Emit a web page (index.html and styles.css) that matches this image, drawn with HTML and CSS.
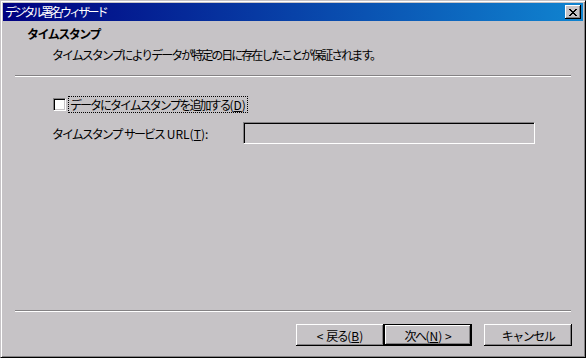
FILE: index.html
```html
<!DOCTYPE html>
<html>
<head>
    <meta charset="UTF-8">
    <title>デジタル署名ウィザード</title>
    <link rel="stylesheet" href="styles.css">
</head>
<body>
    <div class="window">
        <div class="titlebar">
            <span class="title">デジタル署名ウィザード</span>
            <button class="close-btn" aria-label="閉じる">
                <svg width="8" height="7" viewBox="0 0 8 7">
                    <path d="M0 0h2v1h1v1h2V1h1V0h2v1H7v1H6v1H5v1h1v1h1v1h1v1H6V6H5V5H3v1H2v1H0V6h1V5h1V4h1V3H2V2H1V1H0z" fill="#000"/>
                </svg>
            </button>
        </div>

        <!-- ヘッダー -->
        <div class="header">
            <div class="header-title">タイムスタンプ</div>
            <div class="header-desc">タイムスタンプによりデータが特定の日に存在したことが保証されます。</div>
        </div>
        <div class="separator"></div>

        <!-- 本体 -->
        <div class="content">
            <div class="check-row">
                <span class="checkbox"></span>
                <span class="check-label">データにタイムスタンプを追加する<span class="lat">(<u>D</u>)</span></span>
            </div>
            <div class="url-row">
                <span class="url-label">タイムスタンプ<span class="lat">&nbsp;</span>サービス<span class="lat">&nbsp;URL(<u>T</u>):</span></span>
                <span class="url-input"></span>
            </div>
        </div>

        <div class="separator"></div>
        <div class="buttons">
            <button class="btn"><span class="lat">&lt;&nbsp;</span>戻る<span class="lat">(<u>B</u>)</span></button>
            <button class="btn btn-default">次へ<span class="lat">(<u>N</u>)&nbsp;&gt;</span></button>
            <button class="btn btn-cancel">キャンセル</button>
        </div>
    </div>
</body>
</html>
```

FILE: styles.css
```css
/* ダイアログの見た目 */
body {
    margin: 0;
    padding: 0;
    background-color: #c6c3c6;
    font-family: "Noto Sans CJK JP", "Liberation Sans", sans-serif;
    font-size: 12px;
    letter-spacing: -2px;
    color: #000;
}

.lat {
    letter-spacing: 0;
}

.window {
    width: 586px;
    height: 358px;
    box-sizing: border-box;
    border: 1px solid;
    border-color: #c6c3c6 #000 #000 #c6c3c6;
    box-shadow: inset 1px 1px #fff, inset -1px -1px #848284;
    padding: 2px;
    display: flex;
    flex-direction: column;
    background-color: #c6c3c6;
}

.titlebar {
    height: 18px;
    background: linear-gradient(to right, #000080, #1084d0);
    display: flex;
    align-items: center;
    justify-content: space-between;
    padding: 0 2px 0 2px;
}

.title {
    color: #fff;
    font-size: 12px;
    line-height: 18px;
    letter-spacing: -2.8px;
}

.close-btn {
    width: 16px;
    height: 14px;
    padding: 0;
    margin: 0;
    border: none;
    background-color: #c6c3c6;
    box-shadow: inset -1px -1px #000, inset 1px 1px #fff, inset -2px -2px #848284;
    display: flex;
    align-items: center;
    justify-content: center;
}

.header {
    height: 54px;
    box-sizing: border-box;
    padding: 5px 0 0 24px;
}

.header-title {
    font-weight: bold;
    line-height: 15px;
    letter-spacing: -1.5px;
}

.header-desc {
    padding-left: 25px;
    margin-top: 6px;
    line-height: 15px;
}

.separator {
    margin: 0 12px;
    border-top: 1px solid #848284;
    border-bottom: 1px solid #fff;
    height: 0;
}

.content {
    flex: 1;
    padding: 19px 0 0 49px;
}

.check-row {
    display: flex;
    align-items: center;
    height: 17px;
}

.checkbox {
    width: 13px;
    height: 13px;
    box-sizing: border-box;
    background-color: #fff;
    border: 1px solid;
    border-color: #848284 #fff #fff #848284;
    box-shadow: inset 1px 1px #000, inset -1px -1px #c6c3c6;
    margin-left: 1px;
}

.check-label {
    margin-left: 3px;
    padding: 0 1px;
    line-height: 15px;
    outline: 1px dotted #000;
}

.url-row {
    display: flex;
    align-items: center;
    margin-top: 9px;
}

.url-label {
    width: 191px;
}

.url-input {
    width: 292px;
    height: 22px;
    box-sizing: border-box;
    border: 1px solid;
    border-color: #848284 #fff #fff #848284;
    box-shadow: inset 1px 1px #000;
}

.buttons {
    display: flex;
    justify-content: flex-end;
    padding: 12px 11px 9px 0;
}

.btn {
    width: 88px;
    height: 22px;
    padding: 0;
    margin: 0;
    font-family: "Noto Sans CJK JP", "Liberation Sans", sans-serif;
    font-size: 12px;
    letter-spacing: -1.5px;
    color: #000;
    background-color: #c6c3c6;
    border: none;
    box-shadow: inset -1px -1px #000, inset 1px 1px #fff, inset -2px -2px #848284;
}

.btn-default {
    border: 1px solid #000;
}

.btn-cancel {
    margin-left: 12px;
}
```
